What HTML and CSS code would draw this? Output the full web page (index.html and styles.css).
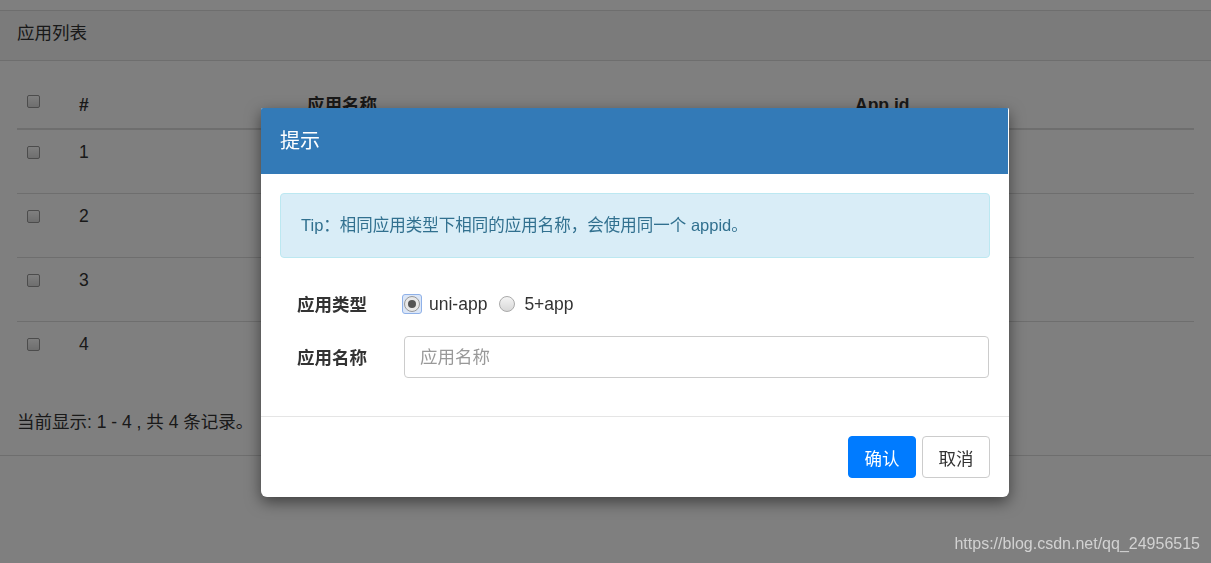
FILE: index.html
```html
<!DOCTYPE html>
<html lang="zh-CN">
<head>
    <meta charset="UTF-8">
    <meta name="viewport" content="width=device-width, initial-scale=1.0">
    <title>应用列表</title>
    <link rel="stylesheet" href="styles.css">
</head>
<body>
<div class="panel">
    <div class="panel-heading">应用列表</div>
    <div class="panel-body">
        <table class="app-table">
            <thead>
                <tr>
                    <th class="col-check"><span class="chk"></span></th>
                    <th class="col-num">#</th>
                    <th class="col-name">应用名称</th>
                    <th class="col-id">App id</th>
                </tr>
            </thead>
            <tbody>
                <tr><td><span class="chk"></span></td><td>1</td><td></td><td></td></tr>
                <tr><td><span class="chk"></span></td><td>2</td><td></td><td></td></tr>
                <tr><td><span class="chk"></span></td><td>3</td><td></td><td></td></tr>
                <tr><td><span class="chk"></span></td><td>4</td><td></td><td></td></tr>
            </tbody>
        </table>
        <p class="summary">当前显示: 1 - 4 , 共 4 条记录。</p>
    </div>
</div>

<div class="backdrop"></div>

<div class="modal">
    <div class="modal-header">提示</div>
    <div class="modal-body">
        <div class="alert">Tip：相同应用类型下相同的应用名称，会使用同一个 appid。</div>
        <div class="form-row first">
            <label class="form-label">应用类型</label>
            <div class="radios">
                <span class="focus-ring"><span class="radio checked"><span class="dot"></span></span></span>
                <span class="radio-text">uni-app</span>
                <span class="radio"></span>
                <span class="radio-text">5+app</span>
            </div>
        </div>
        <div class="form-row">
            <label class="form-label">应用名称</label>
            <input class="text-input" type="text" placeholder="应用名称">
        </div>
    </div>
    <div class="modal-footer">
        <button class="btn btn-primary">确认</button>
        <button class="btn btn-default">取消</button>
    </div>
</div>

<div class="watermark">https://blog.csdn.net/qq_24956515</div>
</body>
</html>
```
FILE: styles.css
```css
* {
    box-sizing: border-box;
}
body {
    margin: 0;
    background-color: #fff;
    color: #333;
    font-family: "Liberation Sans", "Noto Sans CJK SC", sans-serif;
    font-size: 17.5px;
    text-spacing-trim: space-all;
}

/* page behind the dialog */
.panel {
    margin-top: 10px;
    border-top: 1px solid #ddd;
    border-bottom: 1px solid #ddd;
}
.panel-heading {
    height: 50px;
    padding: 10px 17px 0;
    line-height: 24px;
    background-color: #f6f6f6;
    border-bottom: 1px solid #ddd;
}
.panel-body {
    padding: 16px 17px 21px;
}
.app-table {
    width: 100%;
    border-collapse: collapse;
}
.app-table th {
    text-align: left;
    font-weight: bold;
    height: 52px;
    vertical-align: bottom;
    padding: 0 10px 12px;
    border-bottom: 2px solid #ddd;
}
.app-table th .chk {
    vertical-align: 3px;
}
.app-table td {
    height: 64px;
    vertical-align: top;
    padding: 12px 10px 0;
    border-top: 1px solid #ddd;
}
.app-table tbody tr:first-child td {
    border-top: none;
}
.col-check { width: 52px; }
.col-num { width: 228px; }
.col-name { width: 548px; }
.chk {
    display: inline-block;
    width: 13px;
    height: 13px;
    border: 1px solid #999;
    border-radius: 2px;
    background: linear-gradient(#fff, #ddd);
    vertical-align: -1px;
}
.summary {
    margin: 25px 0 0;
    line-height: 24px;
}

/* dialog */
.backdrop {
    position: fixed;
    top: 0;
    left: 0;
    right: 0;
    bottom: 0;
    background-color: rgba(0, 0, 0, 0.5);
}
.modal {
    position: absolute;
    top: 108px;
    left: 261px;
    width: 748px;
    background-color: #fff;
    border-radius: 2px 2px 6px 6px;
    box-shadow: 0 5px 15px rgba(0, 0, 0, 0.5);
    overflow: hidden;
}
.modal-header {
    height: 66px;
    padding: 0 19px 3px;
    display: flex;
    align-items: center;
    background-color: #337ab7;
    color: #fff;
    font-size: 20px;
    border-right: 1px solid #fff;
}
.modal-body {
    padding: 19px 19px 38px;
    border-bottom: 1px solid #e5e5e5;
}
.alert {
    height: 65px;
    padding: 0 20px 3px;
    display: flex;
    align-items: center;
    background-color: #d9edf7;
    border: 1px solid #bce8f1;
    border-radius: 4px;
    color: #31708f;
    font-size: 16.5px;
}
.form-row {
    display: flex;
    align-items: center;
    padding-left: 17px;
    margin-top: 12px;
}
.form-row.first {
    margin-top: 26px;
    height: 40px;
}
.form-label {
    width: 107px;
    font-weight: bold;
    color: #333;
    padding-bottom: 2px;
}
.radios {
    display: flex;
    align-items: center;
}
.focus-ring {
    display: flex;
    margin: 0 -2px;
    padding: 1px;
    border: 1px solid #8fb1e8;
    border-radius: 3px;
    background-color: #dbe6f7;
}
.radio {
    width: 16px;
    height: 16px;
    border-radius: 50%;
    border: 1px solid #aaa;
    background: linear-gradient(#f4f4f4, #d8d8d8);
    display: flex;
    align-items: center;
    justify-content: center;
}
.radio.checked {
    border-color: #999;
    background: #e8e8e8;
}
.radio .dot {
    width: 8px;
    height: 8px;
    border-radius: 50%;
    background-color: #555;
}
.radio-text {
    margin: 0 12px 0 9px;
    color: #333;
}
.text-input {
    flex: 1;
    height: 42px;
    margin-right: 1px;
    padding: 0 15px;
    border: 1px solid #ccc;
    border-radius: 4px;
    font-family: inherit;
    font-size: 17.5px;
    color: #555;
}
.text-input::placeholder {
    color: #999;
}
.modal-footer {
    padding: 19px;
    display: flex;
    justify-content: flex-end;
    gap: 6px;
}
.btn {
    height: 42px;
    width: 68px;
    border-radius: 4px;
    font-family: inherit;
    font-size: 17.5px;
    cursor: pointer;
}
.btn-primary {
    background-color: #007bff;
    border: 1px solid #007bff;
    color: #fff;
}
.btn-default {
    background-color: #fff;
    border: 1px solid #ccc;
    color: #333;
}

.watermark {
    position: absolute;
    right: 11px;
    top: 533px;
    color: #d2d2d2;
    font-size: 16px;
    line-height: 22px;
}
```
